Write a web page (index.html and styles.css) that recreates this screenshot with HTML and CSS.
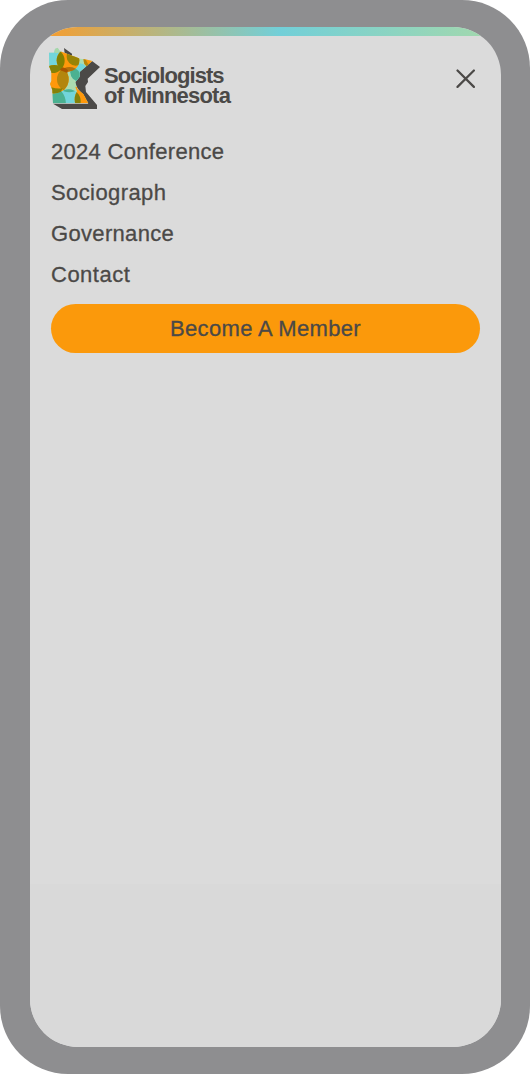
FILE: index.html
```html
<!DOCTYPE html>
<html lang="en">
<head>
<meta charset="utf-8">
<title>Sociologists of Minnesota</title>
<link rel="stylesheet" href="styles.css">
</head>
<body>
<div class="phone">
  <div class="screen">
    <div class="accent"></div>
    <header class="header">
      <a class="brand">
        <svg class="mark" width="53" height="61" viewBox="24 24 159 183" aria-hidden="true">
          <defs>
            <clipPath id="state"><path d="M27 38H43L45 27L53 23L59 33L75 39L90 45L105 50L120 56L135 58L157 63L140 78L119 96L119 110L106 127L113 148L130 163L145 190H39L37 150L30 132L34 122L34 96L28 80Z"/></clipPath>
            <clipPath id="top-orange"><circle cx="84" cy="61" r="34"/></clipPath>
            <clipPath id="left-orange"><circle cx="43" cy="118" r="43"/></clipPath>
            <clipPath id="middle-green"><circle cx="88" cy="118" r="37"/></clipPath>
            <clipPath id="low-cyan"><circle cx="86" cy="184" r="36"/></clipPath>
          </defs>
          <path fill="#4b4947" d="M72 24L96 41V50L140 66L156 63L180 81L143 116L144 126L136 138L138 156L171 195V207H66L39 191H145L106 135V120L119 108V90L75 49Z"/>
          <g clip-path="url(#state)">
            <path fill="#acdcb0" d="M20 20h170v180H20z"/>
            <circle cx="37" cy="62" r="37" fill="#72d5da"/>
            <circle cx="51" cy="29" r="10" fill="#a6d7aa"/>
            <circle cx="118" cy="97" r="27" fill="#72d5da"/>
            <circle cx="84" cy="61" r="34" fill="#ff980b"/>
            <circle cx="43" cy="118" r="43" fill="#ff980b"/>
            <circle cx="37" cy="62" r="37" fill="#838000" clip-path="url(#top-orange)"/>
            <circle cx="37" cy="62" r="37" fill="#858206" clip-path="url(#left-orange)"/>
            <circle cx="107" cy="50" r="27" fill="#988306" clip-path="url(#top-orange)"/>
            <circle cx="118" cy="97" r="27" fill="#4bb191" clip-path="url(#middle-green)"/>
            <circle cx="88" cy="118" r="37" fill="#b3860d" clip-path="url(#left-orange)"/>
            <circle cx="88" cy="118" r="37" fill="#b3700a" clip-path="url(#top-orange)"/>
            <path fill="#a85600" d="M62 86Q72 77 84 91L82 99Q71 94 60 91Z"/>
            <circle cx="86" cy="184" r="36" fill="#72d5da"/>
            <circle cx="88" cy="118" r="39" fill="#4bb191" clip-path="url(#low-cyan)"/>
            <path fill="#4bb191" d="M34 161Q50 162 64 154Q78 170 78 194H34Z"/>
            <path fill="#858108" d="M34 142Q54 148 68 144L63 155Q50 162 34 160Z"/>
            <circle cx="146" cy="178" r="42" fill="#ff980b"/>
            <path fill="#ff980b" d="M106 140L118 142L145 170L120 180Z"/>
            <circle cx="146" cy="178" r="42" fill="#858108" clip-path="url(#low-cyan)"/>
            <circle cx="149" cy="63" r="18" fill="#ff980b"/>
            <path fill="#b3860d" d="M130 56L138 60L145 74L142 80L133 72Z"/>
          </g>
        </svg>
        <span class="name"><span class="name-top">Sociologists</span><span class="name-bottom">of Minnesota</span></span>
      </a>
      <svg class="close" width="20" height="20" viewBox="0 0 20 20" role="img" aria-label="Close"><path d="M1.5 1.5L17.9 17.9M17.9 1.5L1.5 17.9"/></svg>
    </header>
    <nav class="menu">
      <a class="link conference">2024 Conference</a>
      <a class="link sociograph">Sociograph</a>
      <a class="link governance">Governance</a>
      <a class="link contact">Contact</a>
      <a class="button">Become A Member</a>
    </nav>
    <div class="footer"></div>
  </div>
</div>
</body>
</html>
```
FILE: styles.css
```css
* { box-sizing: border-box; }
body { margin: 0; background: #fff; font-family: "Liberation Sans", Arial, sans-serif; color: #4b4947; }
.phone { width: 530px; height: 1074px; padding: 27px 29px 27px 30px; border-radius: 68px; background: #8e8e90; }
.screen { display: flex; flex-direction: column; height: 1020px; border-radius: 48px; overflow: hidden; background: #dbdbdb; }
.accent { height: 9px; flex: none; background: linear-gradient(90deg, #f49e31 4%, #72cfd8 53%, #a2d8ae 97%); }
.header { display: flex; justify-content: space-between; height: 95px; padding: 12px 25px 0 18px; }
.brand { display: flex; }
.mark { display: block; overflow: visible; }
.name { display: flex; flex-direction: column; margin: 18px 0 0 3px; font-size: 22px; font-weight: 700; line-height: 19.5px; white-space: nowrap; }
.name-top { letter-spacing: -0.93px; }
.name-bottom { letter-spacing: -0.8px; }
.close { display: block; margin-top: 21px; fill: none; stroke: #4b4947; stroke-width: 2.2; stroke-linecap: round; }
.menu { display: flex; flex-direction: column; padding: 0 21px; font-size: 22px; line-height: 41px; -webkit-text-stroke: 0.3px #4b4947; }
.link { height: 41px; }
.conference { letter-spacing: 0.3px; }
.sociograph { letter-spacing: 0.4px; }
.governance { letter-spacing: 0.33px; }
.contact { letter-spacing: 0.5px; }
.button { height: 49px; margin-top: 9px; border-radius: 25px; background: #fb990b; line-height: 49px; text-align: center; letter-spacing: 0.35px; }
.footer { height: 163px; margin-top: auto; background: #d9d9d9; }
```
